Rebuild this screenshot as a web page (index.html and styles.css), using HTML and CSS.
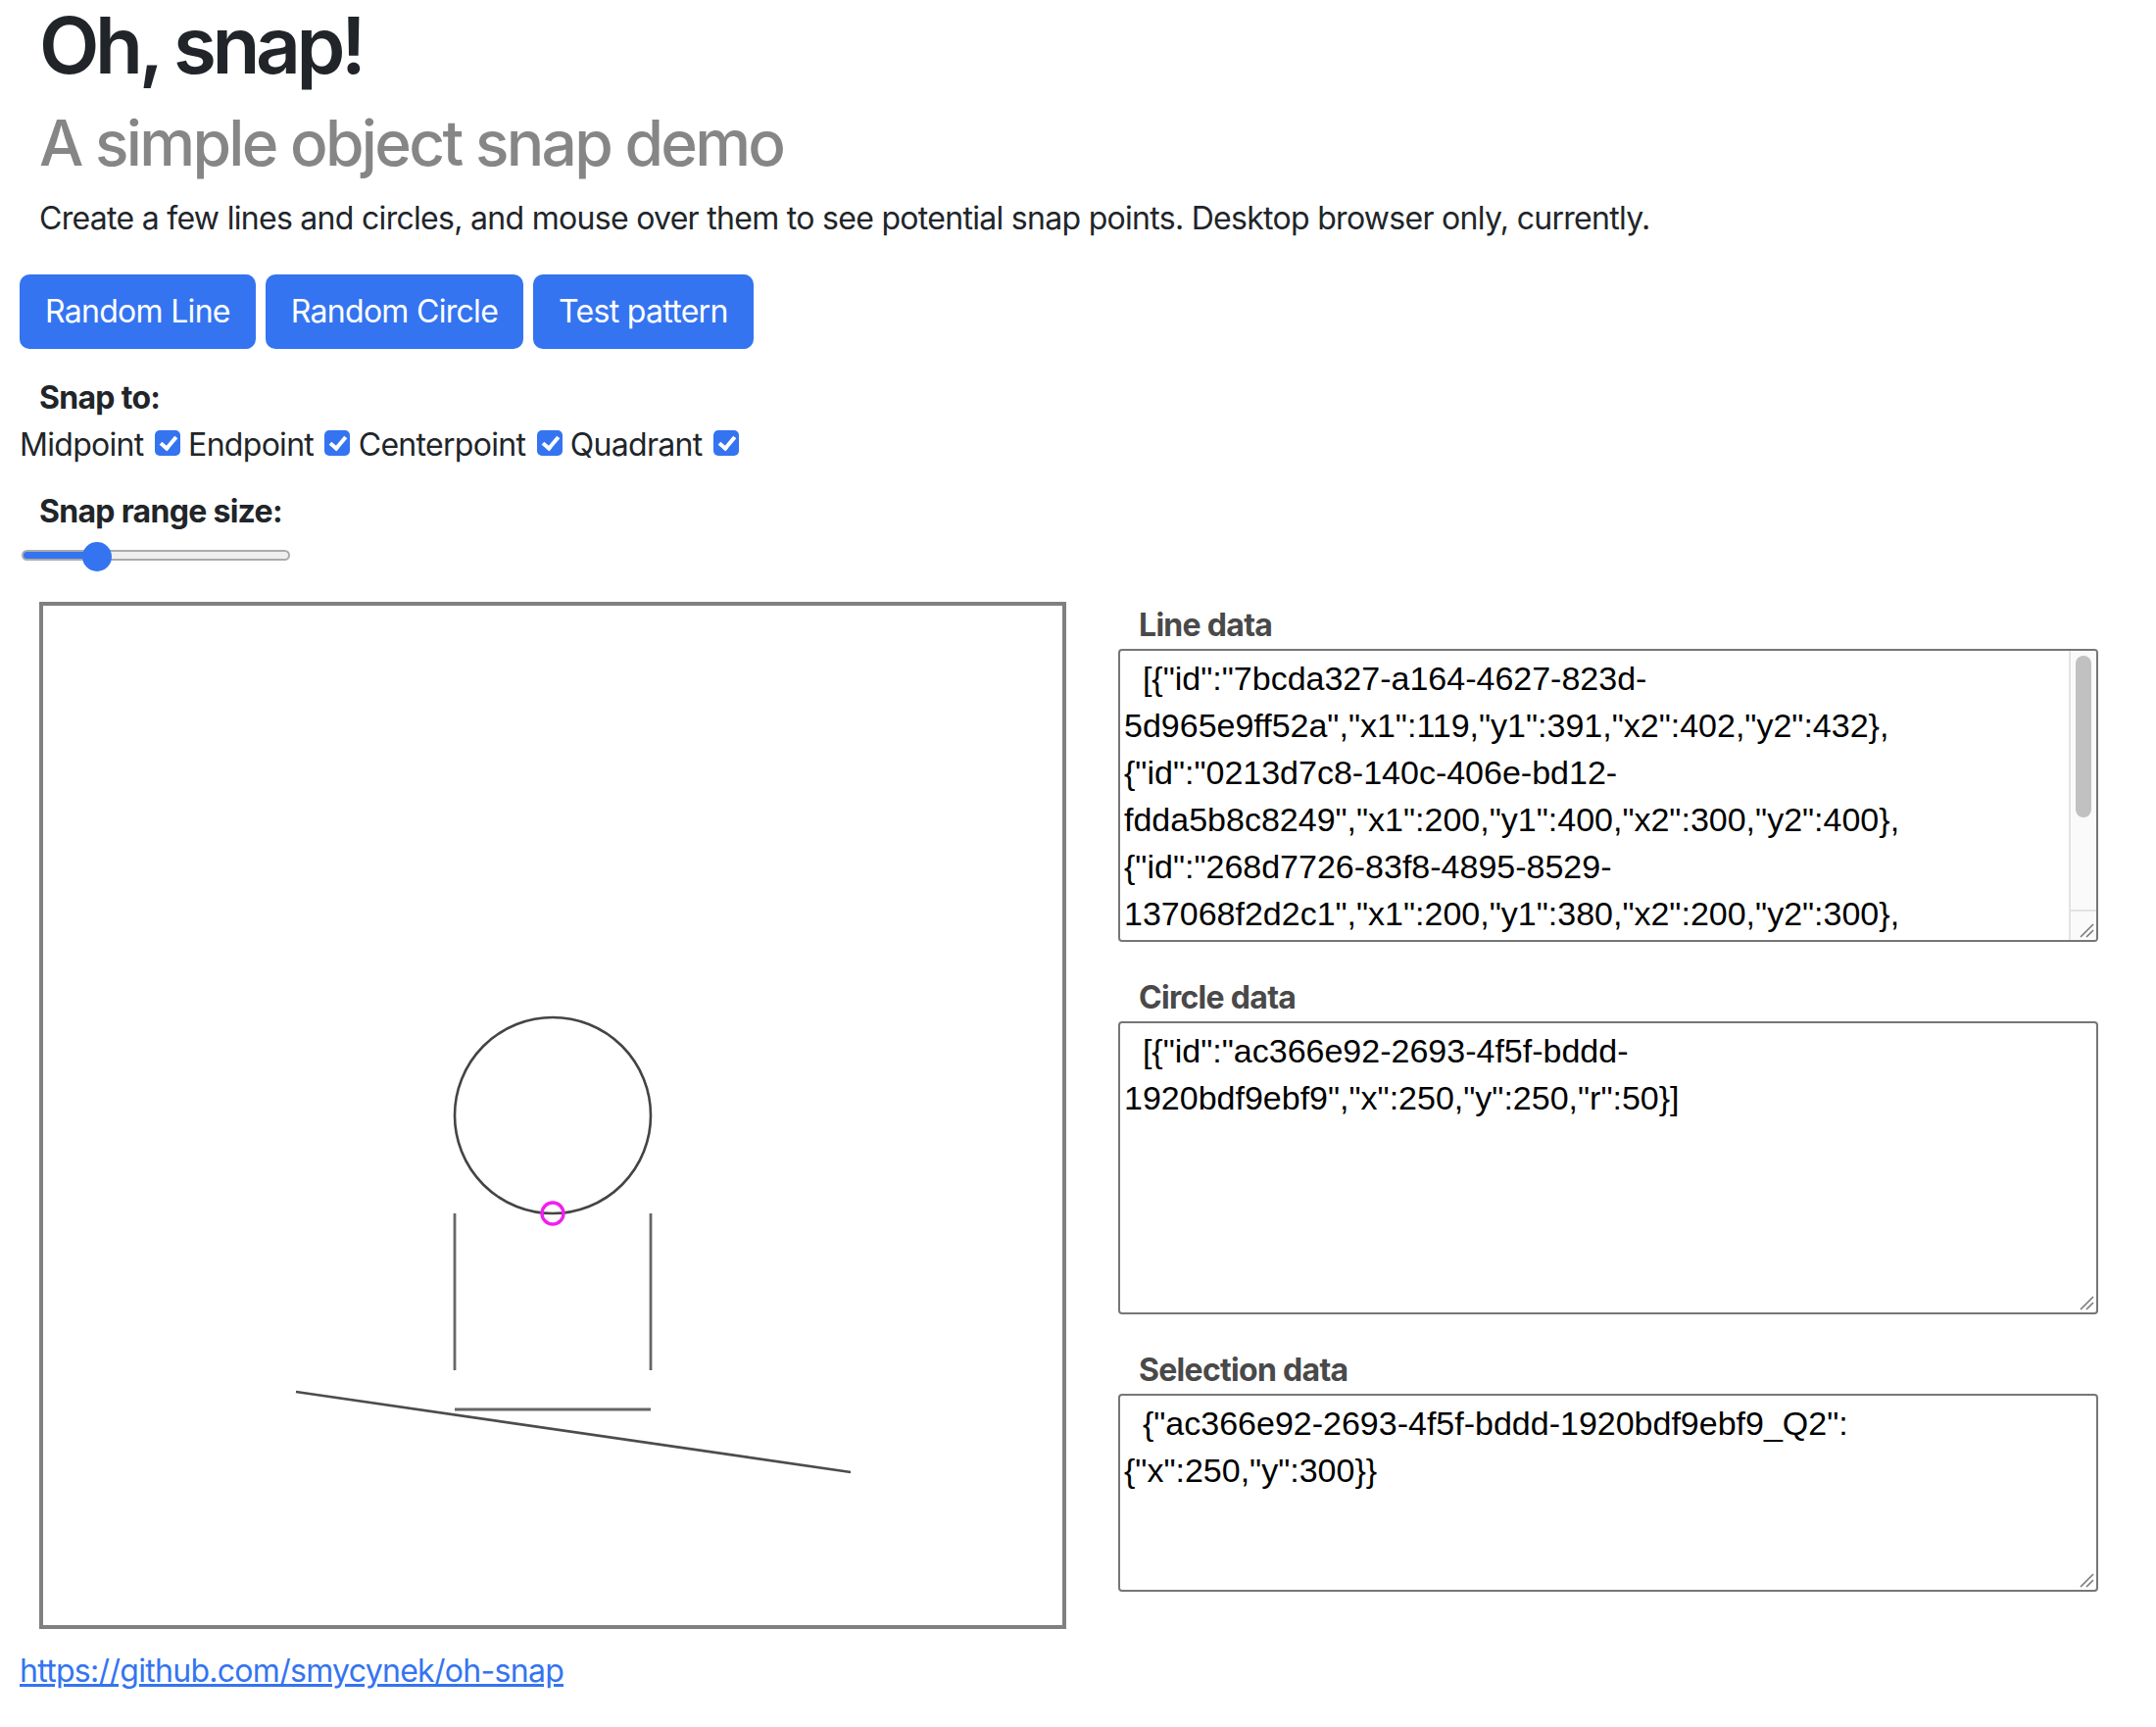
FILE: index.html
```html
<!DOCTYPE html>
<html lang="en">
<head>
<meta charset="utf-8">
<title>Oh, snap!</title>
<link rel="stylesheet" href="styles.css">
</head>
<body>
<div class="page">
  <h1 class="title">Oh, snap!</h1>
  <h2 class="subtitle">A simple object snap demo</h2>
  <p class="intro">Create a few lines and circles, and mouse over them to see potential snap points. Desktop browser only, currently.</p>

  <div class="actions">
    <button class="btn" type="button">Random Line</button>
    <button class="btn" type="button">Random Circle</button>
    <button class="btn" type="button">Test pattern</button>
  </div>

  <div class="snap">
    <div class="field-label">Snap to:</div>
    <div class="options">Midpoint <input class="check" type="checkbox" checked> Endpoint <input class="check" type="checkbox" checked> Centerpoint <input class="check" type="checkbox" checked> Quadrant <input class="check" type="checkbox" checked></div>
  </div>

  <div class="range-group">
    <div class="field-label">Snap range size:</div>
    <input class="range" type="range" min="0" max="40" value="10" style="--fill: 28%">
  </div>

  <div class="workspace">
    <div class="board">
      <svg class="board-canvas" viewBox="0 0 500 500" width="1000" height="1000">
        <circle cx="250" cy="250" r="50" fill="none" stroke="#444444" stroke-width="1.3"/>
        <line x1="119" y1="391" x2="402" y2="432" stroke="#4c4c4c" stroke-width="1.3"/>
        <line x1="200" y1="400" x2="300" y2="400" stroke="#666666" stroke-width="1.4"/>
        <line x1="200" y1="380" x2="200" y2="300" stroke="#666666" stroke-width="1.4"/>
        <line x1="300" y1="380" x2="300" y2="300" stroke="#666666" stroke-width="1.4"/>
        <circle cx="250" cy="300" r="5.5" fill="none" stroke="#f020f0" stroke-width="1.7"/>
      </svg>
    </div>

    <div class="data">
      <div class="data-group">
        <label class="data-label" for="lines">Line data</label>
        <div class="field">
          <textarea id="lines" class="data-text tall with-bar" spellcheck="false">  [{"id":"7bcda327-a164-4627-823d-
5d965e9ff52a","x1":119,"y1":391,"x2":402,"y2":432},
{"id":"0213d7c8-140c-406e-bd12-
fdda5b8c8249","x1":200,"y1":400,"x2":300,"y2":400},
{"id":"268d7726-83f8-4895-8529-
137068f2d2c1","x1":200,"y1":380,"x2":200,"y2":300},
{"id":"e41b0c7a-5f3d-4c8e-9a71-
3d2f6b8e1c47","x1":300,"y1":380,"x2":300,"y2":300},
{"id":"9b2c4e11-07aa-4d61-b3f0-
a8e5d3c29f06","x1":200,"y1":300,"x2":300,"y2":300}]</textarea>
          <div class="scrollbar" aria-hidden="true">
            <div class="scrollbar-thumb"></div>
            <div class="scrollbar-corner"></div>
          </div>
          <svg class="grip" viewBox="0 0 16 16" width="16" height="16" aria-hidden="true"><path d="M2 15 L15 2 M8 15 L15 8" stroke="#7a7a7a" stroke-width="1.6" fill="none"/></svg>
        </div>
      </div>
      <div class="data-group">
        <label class="data-label" for="circles">Circle data</label>
        <div class="field">
          <textarea id="circles" class="data-text tall" spellcheck="false">  [{"id":"ac366e92-2693-4f5f-bddd-
1920bdf9ebf9","x":250,"y":250,"r":50}]</textarea>
          <svg class="grip" viewBox="0 0 16 16" width="16" height="16" aria-hidden="true"><path d="M2 15 L15 2 M8 15 L15 8" stroke="#7a7a7a" stroke-width="1.6" fill="none"/></svg>
        </div>
      </div>
      <div class="data-group">
        <label class="data-label" for="selection">Selection data</label>
        <div class="field">
          <textarea id="selection" class="data-text short" spellcheck="false">  {"ac366e92-2693-4f5f-bddd-1920bdf9ebf9_Q2":
{"x":250,"y":300}}</textarea>
          <svg class="grip" viewBox="0 0 16 16" width="16" height="16" aria-hidden="true"><path d="M2 15 L15 2 M8 15 L15 8" stroke="#7a7a7a" stroke-width="1.6" fill="none"/></svg>
        </div>
      </div>
    </div>
  </div>

  <a class="repo" href="https://github.com/smycynek/oh-snap">https://github.com/smycynek/oh-snap</a>
</div>
</body>
</html>
```

FILE: styles.css
```css
html, body {
  margin: 0;
  padding: 0;
  background: #ffffff;
}

body {
  font-family: Inter, "Noto Sans", "Liberation Sans", sans-serif;
  font-size: 32px;
  line-height: 48px;
  letter-spacing: -0.022em;
  color: #212529;
}

.page {
  padding: 0 20px 30px;
}

.title {
  font-size: 80px;
  line-height: 92px;
  font-weight: 600;
  letter-spacing: -0.055em;
  margin: 0 0 15px;
  padding-left: 20px;
}

.subtitle {
  font-size: 64px;
  line-height: 77px;
  font-weight: 500;
  letter-spacing: -0.042em;
  color: #868686;
  margin: 0 0 15px;
  padding-left: 20px;
}

.intro {
  margin: 0 0 33px;
  padding-left: 20px;
}

.actions {
  display: flex;
  gap: 10px;
}

.btn {
  font: inherit;
  line-height: 48px;
  letter-spacing: inherit;
  color: #ffffff;
  background: #3474f1;
  border: 2px solid #3474f1;
  border-radius: 10px;
  padding: 12px 24px;
  margin: 0;
}

.snap {
  margin-top: 26px;
}

.field-label {
  font-weight: 700;
  padding-left: 20px;
}

.options {
  white-space: nowrap;
}

.check {
  -webkit-appearance: none;
  appearance: none;
  position: relative;
  width: 26px;
  height: 26px;
  margin: 0 0 0 3px;
  background: #3474f1;
  border-radius: 5px;
  vertical-align: baseline;
}

.check::after {
  content: "";
  position: absolute;
  left: 9px;
  top: 3px;
  width: 6px;
  height: 13px;
  border: solid #ffffff;
  border-width: 0 4px 4px 0;
  transform: rotate(40deg);
}

.range-group {
  margin-top: 20px;
}

.range {
  -webkit-appearance: none;
  appearance: none;
  display: block;
  width: 274px;
  height: 30px;
  margin: 5px 0 0 2px;
  background: transparent;
}

.range::-webkit-slider-runnable-track {
  height: 11px;
  border: 2px solid #ababab;
  border-radius: 8px;
  background: linear-gradient(to right, #3474f1 0, #3474f1 var(--fill), #efefef var(--fill), #efefef 100%);
}

.range::-webkit-slider-thumb {
  -webkit-appearance: none;
  appearance: none;
  width: 30px;
  height: 30px;
  margin-top: -9.5px;
  border-radius: 50%;
  background: #3474f1;
  border: none;
}

.workspace {
  display: flex;
  align-items: flex-start;
  gap: 53px;
  margin-top: 33px;
}

.board {
  margin-left: 20px;
  border: 4px solid #808080;
  padding: 20px;
  flex: none;
}

.board-canvas {
  display: block;
}

.data {
  width: 1000px;
  display: flex;
  flex-direction: column;
  gap: 33px;
}

.data-label {
  display: block;
  font-weight: 700;
  color: #494949;
  padding-left: 21px;
}

.field {
  position: relative;
}

.data-text {
  display: block;
  box-sizing: border-box;
  width: 1000px;
  margin: 0;
  padding: 4px;
  border: 2px solid #767676;
  border-radius: 4px;
  font-family: "Liberation Sans", Arial, sans-serif;
  font-size: 34px;
  line-height: 48px;
  letter-spacing: 0;
  color: #000000;
  background: #ffffff;
  resize: none;
  overflow: hidden;
}

.with-bar {
  padding-right: 34px;
}

.tall {
  height: 299px;
}

.short {
  height: 202px;
}

.scrollbar {
  position: absolute;
  top: 2px;
  right: 2px;
  bottom: 2px;
  width: 28px;
  box-sizing: border-box;
  background: #fafafa;
  border-left: 2px solid #e3e3e3;
  border-radius: 0 2px 2px 0;
}

.scrollbar-thumb {
  height: 165px;
  margin: 5px 5px 0;
  background: #c1c1c1;
  border-radius: 8px;
}

.scrollbar-corner {
  position: absolute;
  left: 0;
  right: 0;
  bottom: 0;
  height: 29px;
  border-top: 2px solid #e3e3e3;
}

.grip {
  position: absolute;
  right: 4px;
  bottom: 4px;
  display: block;
}

.repo {
  display: inline-block;
  margin-top: 19px;
  color: #3474f1;
  text-decoration: underline;
}
```
